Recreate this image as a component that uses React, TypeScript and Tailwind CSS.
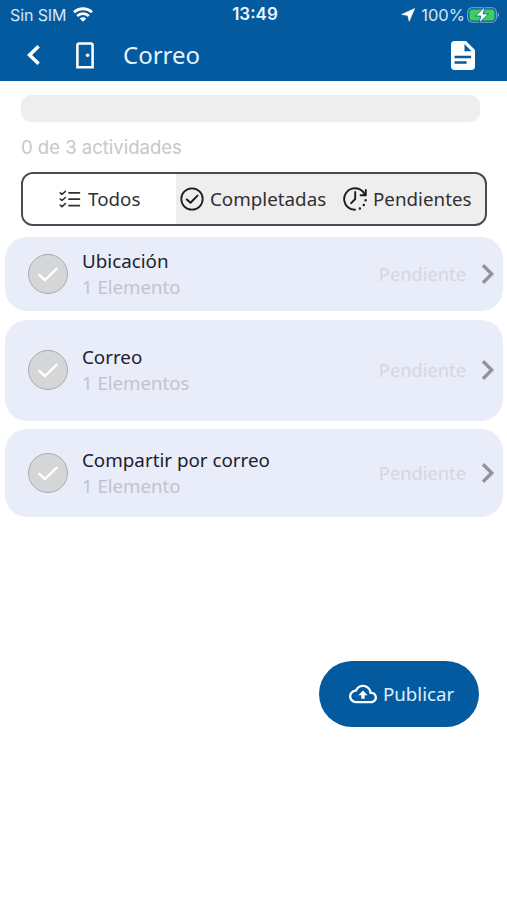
import { MdOutlineCloudUpload } from 'react-icons/md';

const activities = [
  { title: 'Ubicación', detail: '1 Elemento', box: 'h-[74px]' },
  { title: 'Correo', detail: '1 Elementos', box: 'h-[101px]' },
  { title: 'Compartir por correo', detail: '1 Elemento', box: 'h-[88px]' },
];

function WifiIcon() {
  return (
    <svg width="20" height="15" viewBox="0 0 20 15" fill="none" stroke="currentColor" strokeWidth="2.8">
      <path d="M1 5.2C6 .6 14 .6 19 5.2" />
      <path d="M4.2 8.9c3.2-3 8.400-3 11.600 0" />
      <path d="M10 14.800l-3.300-3.400c1.800-1.600 4.800-1.600 6.600 0z" fill="currentColor" stroke="none" />
    </svg>
  );
}

function BatteryIcon() {
  return (
    <svg width="33" height="18" viewBox="0 0 33 18">
      <rect x="0.7" y="1.7" width="28.6" height="14.6" rx="4.5" fill="none" stroke="#7fabd3" strokeWidth="1.1" />
      <rect x="2.5" y="3.5" width="25" height="11" rx="2.8" fill="#3ccf5c" />
      <path d="M30.6 6.6v4.8c1.8-.8 1.8-4 0-4.8z" fill="#7fabd3" />
      <path d="M17.8.8L8.6 10h5.2l-1.8 7.200L21.400 8h-5.200z" fill="#fff" stroke="#045a9f" strokeWidth="0.8" />
    </svg>
  );
}

function DoorIcon() {
  return (
    <svg width="18" height="27" viewBox="0 0 18 27" fill="none">
      <path d="M1.4 25.2V3.6c0-1.2.8-2 2-2h11.2c1.2 0 2 .8 2 2v21.6z" stroke="currentColor" strokeWidth="2.5" />
      <circle cx="11.6" cy="13.2" r="1.8" fill="currentColor" />
    </svg>
  );
}

function ChecklistIcon() {
  return (
    <svg width="22" height="18" viewBox="0 0 22 18" fill="none" stroke="currentColor" strokeWidth="1.7" strokeLinecap="round" strokeLinejoin="round">
      <path d="M10 2.8h10.4M10 9.200h10.400M10 15.600h10.400" />
      <path d="M1.200 2.900l1.700 1.500L6.400 1.400M1.200 9l1.700 1.500 3.500-3M1.200 15.200l1.700 1.500 3.500-3" strokeWidth="1.6" />
    </svg>
  );
}

function CheckCircleIcon() {
  return (
    <svg width="24" height="24" viewBox="0 0 24 24" fill="none" stroke="#1c1c1e" strokeWidth="1.8" strokeLinecap="round" strokeLinejoin="round">
      <circle cx="12" cy="12" r="10.7" />
      <path d="M6.800 12.400l3.700 3.400 7-7.200" strokeWidth="2" />
    </svg>
  );
}

function PendingIcon() {
  return (
    <svg width="24" height="24" viewBox="0 0 24 24" fill="none" stroke="#1c1c1e" strokeWidth="1.9" strokeLinecap="round" strokeLinejoin="round">
      <path d="M12 22.800A10.800 10.800 0 1 1 21.800 7.600" />
      <path d="M22.800 3v5.200h-5.200" />
      <path d="M12.200 5v7l-4 4.200" />
      <path d="M22.600 13.300v.01M20.800 18v.01M16.900 21.400v.01" strokeWidth="2.5" />
    </svg>
  );
}

function ActivityCard({ title, detail, box }: { title: string; detail: string; box: string }) {
  return (
    <li className={`${box} flex items-center rounded-[22px] bg-[#e9ecf9] pl-[23px] pr-[8px]`}>
      <span className="flex size-10 shrink-0 items-center justify-center rounded-full border border-[#aaaab2] bg-[#d5d6d7]">
        <svg width="22" height="18" viewBox="0 0 22 18" fill="none" stroke="#fff" strokeWidth="2.4">
          <path d="M1.6 9.4l6.300 5.600L20.400 3" />
        </svg>
      </span>
      <div className="ml-[14px] flex-1">
        <p className="text-[18.8px] leading-[26px] text-[#20212e]">{title}</p>
        <p className="text-[18.6px] leading-[26px] text-[#c2c3cd]">{detail}</p>
      </div>
      <span className="text-[18.3px] text-[#d5d6df]">Pendiente</span>
      <svg className="ml-[15px]" width="14" height="20" viewBox="0 0 14 20" fill="none" stroke="#92949d" strokeWidth="3.4">
        <path d="M2 1.300l8.700 8.700L2 18.700" />
      </svg>
    </li>
  );
}

export default function App() {
  return (
    <div className="flex h-[900px] w-[507px] flex-col bg-white font-['Noto_Sans',sans-serif]">
      <header className="h-[81px] bg-[#045a9f] text-white">
        <div className="grid h-[29px] grid-cols-3 items-center pl-[10px] pr-[7px] font-['Inter',sans-serif]">
          <div className="flex items-center gap-[7px] text-[#d4e7f8]">
            <span className="pt-px text-[16px] tracking-[-0.1px]">Sin SIM</span>
            <span className="text-white"><WifiIcon /></span>
          </div>
          <span className="pt-px text-center text-[17px] font-semibold text-[#eaf5ff]">13:49</span>
          <div className="flex items-center justify-end">
            <svg width="14" height="14" viewBox="0 0 14 14" fill="currentColor">
              <path d="M13.700.5L8.200 13.300 6.800 7.400.7 6.400z" stroke="currentColor" strokeWidth="0.6" strokeLinejoin="round" />
            </svg>
            <span className="ml-[6px] mr-[2px] pt-px text-[16.5px] text-[#d4e7f8]">100%</span>
            <BatteryIcon />
          </div>
        </div>
        <div className="flex h-[52px] items-center pl-[26px] pr-[32px]">
          <svg width="15" height="20" viewBox="0 0 15 20" fill="none" stroke="currentColor" strokeWidth="3.6">
            <path d="M12.600 1.300L3.600 10l9 8.700" />
          </svg>
          <span className="ml-[35px]"><DoorIcon /></span>
          <h1 className="ml-[29px] flex-1 pb-px text-[24px] leading-8 text-[#e3f2ff]">Correo</h1>
          <svg width="24" height="29" viewBox="0 0 24 29">
            <path d="M3.500 0H15l9 9v16.500c0 2-1.300 3.500-3.400 3.500H3.400C1.300 29 0 27.500 0 25.500v-22C0 1.400 1.400 0 3.500 0z" fill="#fff" />
            <path d="M13.500 3v7.200h7z" fill="#045a9f" />
            <path d="M3.600 16h16.500M3.600 21.600h12" stroke="#045a9f" strokeWidth="2.500" />
          </svg>
        </div>
      </header>

      <main className="flex flex-1 flex-col">
        <div className="ml-[21px] mt-[14px] h-[27px] w-[459px] rounded-[10px] bg-[#eee]" />
        <p className="ml-[21px] mt-[12px] font-['Inter',sans-serif] text-[18.5px] leading-[26px] text-[#c7c7c7]">
          0 de 3 actividades
        </p>

        {/* Filtros */}
        <div className="ml-[21px] mt-[12px] flex h-[54px] w-[466px] overflow-hidden rounded-[12px] border-2 border-[#4b4b4d] bg-[#eee] text-[18.8px] text-[#303033]">
          <button className="flex w-[153px] items-center gap-[7px] bg-white pl-[36px]">
            <ChecklistIcon />
            Todos
          </button>
          <button className="flex w-[158px] items-center gap-[6px] pl-[4px]">
            <CheckCircleIcon />
            Completadas
          </button>
          <button className="flex flex-1 items-center gap-[6px] pl-[9px]">
            <PendingIcon />
            Pendientes
          </button>
        </div>

        <ul className="ml-[5px] mt-[11px] flex w-[498px] flex-col gap-[8.5px]">
          {activities.map((activity) => (
            <ActivityCard key={activity.title} {...activity} />
          ))}
        </ul>

        <button className="ml-[319px] mt-[144px] flex h-[66px] w-[160px] items-center gap-[6px] rounded-full bg-[#045a9f] pl-[30px] text-[18.7px] text-[#dcefff]">
          <MdOutlineCloudUpload className="size-[28px] text-white" />
          Publicar
        </button>
      </main>
    </div>
  );
}
